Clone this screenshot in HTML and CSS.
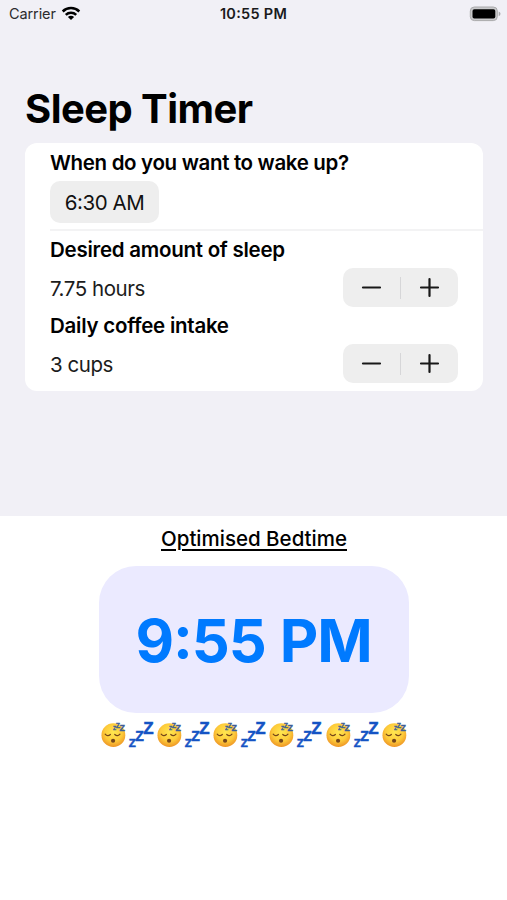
FILE: index.html
```html
<!DOCTYPE html>
<html lang="en">
<head>
<meta charset="utf-8">
<title>Sleep Timer</title>
<link rel="stylesheet" href="styles.css">
</head>
<body>
<svg width="0" height="0" class="defs" aria-hidden="true">
  <defs>
    <radialGradient id="skin" cx="50%" cy="38%" r="62%">
      <stop offset="0" stop-color="#ffe750"/>
      <stop offset=".6" stop-color="#fdcb3a"/>
      <stop offset="1" stop-color="#ee9425"/>
    </radialGradient>
    <symbol id="face" viewBox="0 0 28 32">
      <circle cx="14.3" cy="17.2" r="11.9" fill="url(#skin)"/>
      <path d="M6.1 16.2q2.5 2.8 5.2.3M15.7 16.5q2.7 2.5 5.2-.3" fill="none" stroke="#74451a" stroke-width="1.2" stroke-linecap="round"/>
      <ellipse cx="14" cy="22.7" rx="2.1" ry="2" fill="#74451a"/>
      <g class="zed zed-small">
        <text x="14" y="11.6" font-size="5">Z</text>
        <text x="16.7" y="10.1" font-size="7">Z</text>
        <text x="20.4" y="12.6" font-size="9">Z</text>
      </g>
    </symbol>
    <symbol id="zzz" viewBox="0 0 28 32">
      <g class="zed">
        <text x="1.6" y="29" font-size="11.5">Z</text>
        <text x="8.2" y="23.4" font-size="14">Z</text>
        <text x="16.2" y="16" font-size="17">Z</text>
      </g>
    </symbol>
  </defs>
</svg>
<main class="screen">
  <section class="top">
    <header class="status">
      <div class="carrier"><span class="carrier-name">Carrier</span>
        <svg class="wifi" width="20" height="15" viewBox="0 0 20 15">
          <g fill="none" stroke="#000" stroke-width="2.5">
            <path d="M1.7 5.5a11.8 11.8 0 0 1 16.6 0"/>
            <path d="M4.8 8.8a7.4 7.4 0 0 1 10.4 0"/>
          </g>
          <path d="M10 14.1 6.9 11a4.4 4.4 0 0 1 6.2 0z"/>
        </svg>
      </div>
      <div class="clock">10<span class="colon">:</span>55 PM</div>
      <svg class="battery" width="32" height="16" viewBox="0 0 32 16">
        <rect x="1.3" y="1" width="27" height="13.6" rx="4" fill="#c9c9cb" stroke="#aaaaac" stroke-width="1"/>
        <rect x="3.5" y="3.2" width="22.8" height="9.3" rx="1.8"/>
        <path d="M29.7 5.4q1.8.8 1.8 2.4t-1.8 2.4z" fill="#aaaaac"/>
      </svg>
    </header>
    <h1 class="title">Sleep Timer</h1>
    <div class="card">
      <div class="wake">
        <h2 class="label l-wake">When do you want to wake up?</h2>
        <button class="time">6<span class="colon">:</span>30 AM</button>
      </div>
      <div class="amounts">
        <h2 class="label l-sleep">Desired amount of sleep</h2>
        <div class="row"><span class="value v-hours">7.75 hours</span>
          <div class="stepper">
            <svg viewBox="0 0 57 39"><path d="M20 19.5h17"/></svg>
            <i class="divider"></i>
            <svg viewBox="0 0 57 39"><path d="M20 19.5h17M28.5 11v17"/></svg>
          </div>
        </div>
        <h2 class="label l-coffee">Daily coffee intake</h2>
        <div class="row"><span class="value v-cups">3 cups</span>
          <div class="stepper">
            <svg viewBox="0 0 57 39"><path d="M20 19.5h17"/></svg>
            <i class="divider"></i>
            <svg viewBox="0 0 57 39"><path d="M20 19.5h17M28.5 11v17"/></svg>
          </div>
        </div>
      </div>
    </div>
  </section>
  <section class="result">
    <h2 class="caption">Optimised Bedtime</h2>
    <div class="bedtime"><span class="bedtime-text">9<span class="colon">:</span>55 PM</span></div>
    <div class="emoji">
      <svg><use href="#face"/></svg><svg><use href="#zzz"/></svg><svg><use href="#face"/></svg><svg><use href="#zzz"/></svg><svg><use href="#face"/></svg><svg><use href="#zzz"/></svg><svg><use href="#face"/></svg><svg><use href="#zzz"/></svg><svg><use href="#face"/></svg><svg><use href="#zzz"/></svg><svg><use href="#face"/></svg>
    </div>
  </section>
</main>
</body>
</html>
```
FILE: styles.css
```css
* { box-sizing: border-box; }
body { margin: 0; background: #fff; color: #000; font-family: Inter, "Liberation Sans", sans-serif; }
h1, h2 { margin: 0; white-space: nowrap; }
.defs { display: block; }
.screen { width: 507px; height: 900px; overflow: hidden; }
.top { height: 516px; background: #f1f0f6; }
.status { height: 28px; padding: 0 6px 0 9px; display: grid; grid-template-columns: 1fr auto 1fr; align-items: center; font-size: 14.5px; }
.carrier { display: flex; align-items: center; gap: 6px; color: #2b2b2d; padding-bottom: 2px; }
.carrier-name { letter-spacing: -0.1px; }
.wifi { display: block; margin-left: -1px; }
.clock { font-weight: 600; color: #1a1a1c; letter-spacing: 0.28px; padding: 0 3px 1px 0; }
.battery { display: block; justify-self: end; margin-bottom: 1px; }
.colon { line-height: 0; vertical-align: 0.06em; }
.title { height: 115px; padding: 56px 0 0 25px; font-size: 40px; line-height: 50px; font-weight: 700; letter-spacing: -0.55px; }
.card { width: 458px; height: 248px; margin-left: 25px; background: #fff; border-radius: 12px; overflow: hidden; }
.wake { height: 88px; margin-left: 25px; padding-top: 5px; border-bottom: 2px solid #f3f3f4; }
.label { height: 28px; line-height: 28px; font-size: 20.5px; font-weight: 600; }
.l-wake { line-height: 29px; letter-spacing: -0.33px; }
.l-sleep { letter-spacing: -0.26px; }
.l-coffee { letter-spacing: -0.25px; }
.time { display: block; width: 109px; height: 42px; margin-top: 5px; padding: 0; border: 0; border-radius: 10px; background: #eee; color: #111; font-family: inherit; font-size: 20.5px; letter-spacing: -0.45px; }
.amounts { padding: 5px 25px 0; }
.row { height: 39px; display: flex; justify-content: space-between; align-items: center; margin: 4px 0 5px; }
.value { font-size: 20.5px; color: #1c1c1c; letter-spacing: -0.45px; padding-top: 1px; }
.stepper { width: 115px; height: 39px; display: flex; align-items: center; background: #eee; border-radius: 10px; }
.stepper svg { width: 57px; height: 39px; fill: none; stroke: #181818; stroke-width: 2.2; stroke-linecap: round; }
.divider { width: 1px; height: 22px; background: #d6d6d8; }
.result { display: flex; flex-direction: column; align-items: center; padding-top: 8px; }
.caption { height: 30px; line-height: 30px; font-size: 20.5px; font-weight: 500; text-decoration: underline; text-decoration-thickness: 2px; text-underline-offset: 3px; text-decoration-skip-ink: auto; padding-left: 1px; }
.bedtime { width: 310px; height: 147px; margin-top: 12px; border-radius: 37px; background: #ebeaff; color: #007aff; display: flex; align-items: center; justify-content: center; font-size: 59.5px; font-weight: 650; white-space: nowrap; letter-spacing: -1.1px; word-spacing: 1px; }
.emoji { width: 310px; height: 32px; margin-top: 5px; display: flex; }
.emoji svg { width: 28.15px; height: 32px; flex: none; display: block; }
.zed { font-family: "Liberation Sans", sans-serif; font-weight: 700; fill: #1453c4; stroke: #1453c4; stroke-width: 0.5px; }
.zed-small { fill: #3d5e94; stroke: #3d5e94; stroke-width: 0.3px; }
```
